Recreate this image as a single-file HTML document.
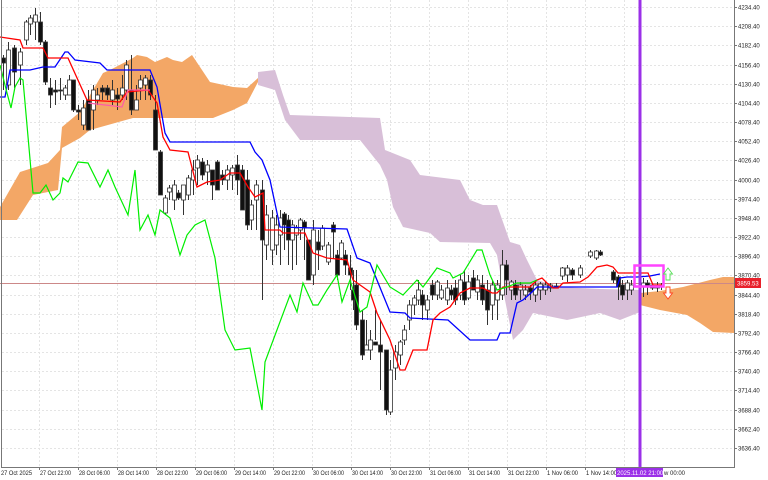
<!DOCTYPE html>
<html><head><meta charset="utf-8"><style>
html,body{margin:0;padding:0;background:#fff;width:768px;height:480px;overflow:hidden}
svg{display:block}
text{font-family:"Liberation Sans",sans-serif;font-size:6px;fill:#222}
</style></head><body>
<svg width="768" height="480" viewBox="0 0 768 480" xmlns="http://www.w3.org/2000/svg">
<rect width="768" height="480" fill="#fff"/>
<g id="grid" stroke="#e4e4e4" stroke-width="1" stroke-dasharray="2,2"></g>
<polygon fill="#f3a766" points="0,207 20,172 48,163 60,150 62,127 80,112 103,73 110,70 133,58 137,55 147,57 155,62 167,57 173,60 182,62 192,55 200,67 210,82 233,87 247,88 258,78 258,82 247,103 233,110 213,118 167,118 133,118 90,130 80,138 62,148 58,190 33,195 17,220 0,220"/>
<polygon fill="#d8bfd8" points="258,72 275,70 283,95 290,115 380,118 385,150 410,160 420,175 460,180 470,200 483,205 497,205 510,242 520,245 527,260 537,280 560,287 600,289 640,290 640,312 620,320 600,313 567,320 533,313 523,330 513,340 505,300 497,255 490,243 440,242 430,233 403,227 393,207 387,180 380,165 360,140 300,140 285,120 275,90 258,85"/>
<polygon fill="#f3a766" points="640,293 660,291 683,287 710,280 723,277 734,277 734,333 713,332 700,323 687,315 660,310 640,305"/>
<line x1="0" y1="283.5" x2="734" y2="283.5" stroke="#c88" stroke-width="1"/>
<g id="candles"></g>
<polyline fill="none" stroke="#0000ff" stroke-width="1.3" points="0,97 5,97 10,70 30,70 43,67 55,67 65,52 68,52 75,60 100,63 107,70 150,70 157,87 165,133 170,142 250,142 255,152 262,160 270,180 280,227 347,229 357,258 370,263 390,312 405,313 410,318 448,320 470,340 497,340 500,333 510,333 517,303 523,300 532,292 537,287 617,287 620,278 627,277 637,277 650,276 660,274"/>
<polyline fill="none" stroke="#ff0000" stroke-width="1.3" points="0,37 20,40 23,48 43,48 48,58 68,58 87,100 120,102 127,92 148,90 157,103 163,137 170,150 188,152 197,187 207,182 220,180 230,173 240,173 248,187 255,197 263,193 265,230 280,230 283,233 305,233 313,253 327,258 347,260 353,280 370,292 377,313 390,340 400,370 405,370 413,350 427,350 433,320 440,313 450,307 460,293 470,288 483,288 492,293 497,293 503,287 530,287 537,280 542,278 547,283 553,288 558,288 563,283 580,282 588,277 597,267 607,265 613,267 618,273 633,273 648,273 653,285 662,285"/>
<polyline fill="none" stroke="#ff5aa8" stroke-width="1.2" points="88,103 122,107 128,90 150,90"/>
<polyline fill="none" stroke="#00ee00" stroke-width="1.2" points="0,65 7,93 11,108 15,87 20,78 23,80 33,193 40,193 46,185 53,200 60,193 63,178 68,182 78,162 88,163 100,187 108,170 115,187 128,215 135,170 140,230 148,215 155,235 160,210 170,218 180,255 187,235 195,225 205,220 215,258 225,330 235,350 250,348 262,410 265,362 290,295 297,312 303,283 313,305 318,305 327,290 337,275 342,302 350,280 360,312 367,307 377,265 390,287 403,295 417,280 423,287 437,268 450,273 453,278 463,273 477,250 482,250 490,275 497,290 507,287 517,283 530,283 537,280"/>
<rect x="638.5" y="0" width="3" height="467" fill="#9b30e8"/>
<rect x="634.5" y="265.5" width="29" height="21" fill="none" stroke="#ff44ff" stroke-width="2.5"/>
<path d="M666,280 V274 H663.5 L668,268 L672.5,274 H670 V280 Z" fill="#fff" stroke="#55dd55" stroke-width="0.9"/>
<path d="M666,287 V293 H663.5 L668,299 L672.5,293 H670 V287 Z" fill="#fff" stroke="#ff4422" stroke-width="0.9"/>
<line x1="1.5" y1="0" x2="1.5" y2="467" stroke="#777"/>
<line x1="734.5" y1="0" x2="734.5" y2="467" stroke="#777"/>
<line x1="1" y1="467.5" x2="735" y2="467.5" stroke="#777"/>
<g id="ylab"></g>
<g id="xlab"></g>
<rect x="735" y="278" width="26" height="10" fill="#e8202a"/>
<text x="737" y="285.5" style="fill:#fff">3859.53</text>
<rect x="616" y="468" width="47" height="9" fill="#9b30e8"/>
<text x="617" y="475" style="fill:#fff">2025.11.02 21:00</text>
<text x="664" y="475">w 00:00</text>
</svg>
<script>
var NS="http://www.w3.org/2000/svg";
function el(p,t,a,txt){var e=document.createElementNS(NS,t);for(var k in a)e.setAttribute(k,a[k]);if(txt)e.textContent=txt;document.getElementById(p).appendChild(e);}
for(var i=0;i<24;i++){var y=Math.round(7+19.17*i);el("grid","line",{x1:2,x2:734,y1:y+.5,y2:y+.5});el("ylab","line",{x1:734,x2:737,y1:y+.5,y2:y+.5,stroke:"#777"});el("ylab","text",{x:738,y:y+2.5},(4234.4-26*i).toFixed(2));}
var xl=["27 Oct 2025","27 Oct 22:00","28 Oct 06:00","28 Oct 14:00","28 Oct 22:00","29 Oct 06:00","29 Oct 14:00","29 Oct 22:00","30 Oct 06:00","30 Oct 14:00","30 Oct 22:00","31 Oct 06:00","31 Oct 14:00","31 Oct 22:00","1 Nov 06:00","1 Nov 14:00"];
for(var j=0;j<17;j++){var x=39*j;if(j>0)el("grid","line",{x1:x+.5,x2:x+.5,y1:0,y2:467});if(j>0)el("xlab","line",{x1:x+.5,x2:x+.5,y1:467,y2:470,stroke:"#777"});if(j<16)el("xlab","text",{x:j?x+1:1,y:475,textLength:j?31:31,lengthAdjust:"spacingAndGlyphs"},xl[j]);}
var C=[[3,55,90,58,63,1],[8,42,90,50,85,0],[14,45,88,48,72,1],[20,48,85,52,65,0],[26,20,45,22,40,0],[30,15,35,18,24,0],[35,8,40,15,22,0],[40,12,45,22,42,1],[45,40,85,42,82,1],[50,78,108,88,95,1],[55,80,105,90,92,1],[60,78,100,90,91,1],[65,85,100,88,95,0],[69,75,95,80,95,0],[73,80,112,80,110,1],[78,105,120,110,112,1],[83,100,130,108,125,0],[88,90,130,100,130,1],[93,85,130,90,110,0],[97,88,105,95,100,0],[102,85,100,88,92,1],[107,85,100,88,95,1],[112,80,105,90,100,0],[117,88,110,95,99,1],[122,75,100,88,95,0],[126,60,100,65,90,0],[131,55,115,90,110,1],[136,85,110,100,110,0],[140,75,100,80,88,0],[145,75,100,78,85,0],[150,75,100,80,95,1],[155,95,150,110,150,1],[160,150,195,152,195,1],[165,195,215,198,213,0],[169,185,200,188,192,0],[174,180,210,185,200,0],[178,190,200,193,198,1],[183,185,215,185,200,0],[188,175,200,178,195,0],[193,160,195,170,180,0],[197,155,185,160,168,0],[202,158,180,162,175,1],[207,160,185,165,172,0],[212,170,200,170,185,1],[217,160,190,162,190,1],[222,170,185,175,180,1],[227,165,190,170,180,0],[232,165,190,168,175,0],[237,155,195,165,180,1],[242,165,210,170,210,1],[247,170,230,180,225,1],[251,200,230,205,220,0],[256,180,230,185,200,0],[262,180,300,190,240,1],[266,205,260,215,245,0],[272,210,265,218,250,0],[276,215,255,225,245,0],[280,210,265,218,235,0],[284,212,250,214,225,1],[288,215,265,220,240,1],[292,220,270,225,240,0],[296,225,265,228,235,0],[300,218,240,220,230,0],[304,220,260,222,228,1],[308,240,280,240,280,1],[313,220,285,230,275,0],[318,230,270,242,250,1],[322,225,250,228,246,0],[328,242,265,245,262,0],[333,222,258,225,232,1],[337,250,280,255,275,1],[341,240,260,243,258,0],[345,250,275,255,265,1],[350,255,290,268,275,1],[353,270,310,290,300,1],[356,270,330,285,325,1],[362,310,360,320,355,1],[366,320,350,345,350,0],[370,330,360,340,350,0],[375,310,340,342,345,1],[380,320,390,345,352,1],[386,350,415,350,410,1],[390,360,415,370,412,0],[395,345,380,352,368,0],[400,340,365,342,355,0],[404,325,345,330,340,0],[409,300,330,305,320,0],[414,295,315,298,305,0],[418,280,305,290,300,0],[422,290,320,295,305,1],[427,295,320,300,310,0],[432,280,300,285,295,1],[437,280,300,282,295,0],[441,285,300,290,298,0],[447,280,305,288,300,0],[451,285,300,290,295,1],[455,280,305,288,300,1],[460,275,300,280,295,0],[464,270,305,282,300,1],[468,275,300,282,298,0],[473,270,290,278,290,1],[477,275,300,280,292,0],[482,275,305,285,300,1],[487,280,325,290,310,1],[492,280,320,285,305,0],[497,280,320,285,300,0],[502,250,300,265,295,0],[506,260,295,265,280,1],[511,280,300,282,290,0],[515,280,300,285,295,1],[520,282,300,285,290,0],[525,285,300,290,295,0],[530,285,300,288,292,1],[535,280,302,285,295,0],[540,282,300,284,290,0],[545,282,295,285,290,0],[550,283,292,285,288,0],[556,283,288,286,288,1],[562,267,280,268,276,0],[567,265,282,268,275,0],[572,268,280,270,275,1],[580,265,278,268,275,0],[590,250,258,252,256,0],[596,250,260,251,258,0],[600,250,256,252,255,1],[613,270,283,272,280,1],[618,275,300,277,287,1],[622,280,300,285,295,1],[627,280,300,283,290,0],[631,280,295,285,290,0],[643,278,297,283,287,0],[647,280,295,283,287,1],[652,285,290,285,288,1],[657,282,292,285,288,0],[661,283,290,286,287,1]];
C.forEach(function(c){el("candles","line",{x1:c[0]+.5,x2:c[0]+.5,y1:c[1],y2:c[2],stroke:"#333","stroke-width":1});el("candles","rect",{x:c[0]-1.5,y:c[3],width:4,height:Math.max(1,c[4]-c[3]),fill:c[5]?"#111":"#fff",stroke:"#333","stroke-width":0.8});});
</script>
</body></html>
